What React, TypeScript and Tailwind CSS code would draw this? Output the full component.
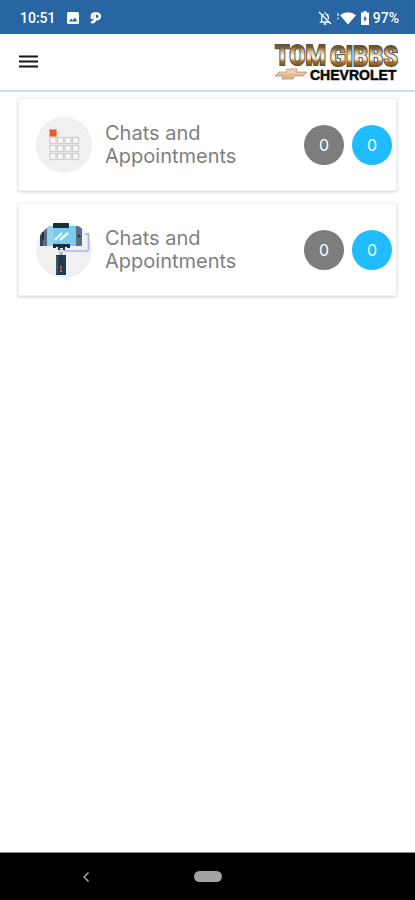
import React from 'react';

const CalendarIcon: React.FC = () => (
  <svg viewBox="0 0 56 56" className="size-14 shrink-0" aria-hidden="true">
    <circle cx="28" cy="28" r="28" fill="#f0f0f0" />
    {[20.5, 28.5, 36.5].map((y) =>
      [14, 21.5, 29, 36.5].map((x) => (
        <rect key={`${x}-${y}`} x={x} y={y} width="6" height="6" fill="#f7f7f7" stroke="#cfcfd3" strokeWidth="1.2" />
      ))
    )}
    <rect x="13.5" y="12.5" width="7" height="7" fill="#f15a24" stroke="#f2a183" strokeWidth="0.6" />
  </svg>
);

const SelfieStickIcon: React.FC = () => (
  <svg viewBox="0 0 56 56" className="size-14 shrink-0" aria-hidden="true">
    <defs>
      <clipPath id="stick-clip">
        <circle cx="28" cy="28" r="28" />
      </clipPath>
    </defs>
    <circle cx="28" cy="28" r="28" fill="#f0f0f0" />
    <path d="M45 11h7v17H29" fill="none" stroke="#eef0fc" strokeWidth="3" />
    <path d="M49 12h3.5v15a2 2 0 0 1-2 2H28" fill="none" stroke="#a9b2e2" strokeWidth="1.6" />
    <g clipPath="url(#stick-clip)">
      <rect x="4" y="4" width="42" height="20" rx="1" fill="#5d6e84" />
      <rect x="4" y="4" width="3" height="20" fill="#33475c" />
      <rect x="11" y="4" width="29" height="20" fill="#7dcbea" />
      <rect x="11" y="4" width="6" height="20" fill="#92d4ee" />
      <circle cx="43" cy="14" r="1.6" fill="#24384c" />
      <rect x="6" y="10" width="2" height="8" fill="#1d3347" />
    </g>
    <path d="M19 18l7-7M24 18l8-7" stroke="#e6f7fd" strokeWidth="2.4" />
    <rect x="17" y="1" width="16" height="5" rx="1" fill="#172f40" />
    <path d="M17 22h17v4h-3v-1h-2v3h-2v-2h-3v2h-2v-3h-2v1h-3z" fill="#172f40" />
    <path d="M25 27v6" stroke="#9ca7b0" strokeWidth="3" />
    <circle cx="25" cy="29" r="1.5" fill="#dfe5e9" />
    <rect x="20" y="33" width="10" height="20" fill="#1d3b4d" />
    <path d="M21 34v18" stroke="#426072" strokeWidth="1.5" />
    <rect x="24" y="44" width="2" height="3" fill="#e04a3c" />
    <rect x="24" y="48" width="2" height="2" fill="#4ba68f" />
  </svg>
);

const DealerLogo: React.FC = () => (
  <svg viewBox="0 0 126 44" className="h-11 w-[126px]" role="img" aria-label="Tom Gibbs Chevrolet">
    <defs>
      <linearGradient id="metal" x1="0" y1="0" x2="0" y2="1">
        <stop offset="0.22" stopColor="#6e5836" />
        <stop offset="0.35" stopColor="#cdb68e" />
        <stop offset="0.5" stopColor="#fbf6ec" />
        <stop offset="0.58" stopColor="#f3e7d2" />
        <stop offset="0.66" stopColor="#b07524" />
        <stop offset="0.8" stopColor="#7a4f18" />
      </linearGradient>
      <linearGradient id="bowtie" x1="0" y1="0" x2="0" y2="1">
        <stop offset="0" stopColor="#f4d9bd" />
        <stop offset="1" stopColor="#d9a982" />
      </linearGradient>
    </defs>
    <g
      className="font-['Roboto_Condensed','Roboto',sans-serif] text-[27px] font-bold"
      fill="url(#metal)"
      stroke="#5c5042"
      strokeWidth="2"
      paintOrder="stroke"
    >
      <text x="2" y="25">TOM</text>
      <text x="57" y="26">GIBBS</text>
    </g>
    <path
      d="M14 29h10l-1 3h11l-4 4H21l-1 3H9l1-3H2l4-4h7z"
      fill="url(#bowtie)"
      stroke="#b39478"
      strokeWidth="0.8"
    />
    <text
      x="37"
      y="40"
      fill="#080808"
      stroke="#080808"
      strokeWidth="0.5"
      className="font-['Liberation_Sans',Arial,sans-serif] text-[14px] font-bold"
    >
      CHEVROLET
    </text>
  </svg>
);

const StatusBar: React.FC = () => (
  <div className="flex h-[34px] items-center justify-between bg-[#2865a3] pt-0.5 pr-4 pl-5 text-sm font-medium text-white">
    <div className="flex items-center">
      <span>10:51</span>
      <svg viewBox="0 0 14 14" className="ml-2.5 size-3.5" aria-hidden="true">
        <rect x="1" y="1" width="12" height="12" rx="1.5" fill="#fff" />
        <path d="M3 10.5l2.200-3 1.600 2 2.200-3 2.500 4z" fill="#2865a3" />
      </svg>
      <svg viewBox="0 0 12 14" className="ml-2.5 h-3.5 w-3" aria-hidden="true">
        <path
          d="M2 7V4.500A2.500 2.500 0 0 1 4.500 2.500H7a2.800 2.800 0 0 1 0 5.700H4.800M4.800 5v3.500c0 1.500-1 2.700-2.800 2.700"
          fill="none"
          stroke="#fff"
          strokeWidth="2.6"
          strokeLinecap="round"
        />
      </svg>
    </div>
    <div className="flex items-center">
      <svg viewBox="0 0 24 24" className="size-4" aria-hidden="true">
        <path
          d="M7 17V11a5 5 0 0 1 3-4.600M12 3v2M13 6a5 5 0 0 1 4 5v3M4 18h13M10 21h4M3 3l18 18"
          fill="none"
          stroke="#fff"
          strokeWidth="2"
        />
      </svg>
      <svg viewBox="0 0 20 14" className="ml-1 h-3.5 w-5" aria-hidden="true">
        <path d="M1 2v3M1 6.500v2" stroke="#d5e4f2" strokeWidth="1.3" />
        <path d="M3 4.300a12 12 0 0 1 16 0L11 13.500z" fill="#fff" />
      </svg>
      <svg viewBox="0 0 8 14" className="ml-1 h-3.5 w-2" aria-hidden="true">
        <path d="M2.500 0h3v1.500H8V14H0V1.500h2.500z" fill="#fff" />
        <path d="M4.600 4L2.300 8.300h1.300V11.500L5.800 7H4.600z" fill="#2865a3" />
      </svg>
      <span className="ml-1">97%</span>
    </div>
  </div>
);

const App: React.FC = () => {
  const items = [
    { id: 1, title: 'Chats and Appointments', icon: <CalendarIcon />, pending: 0, unread: 0 },
    { id: 2, title: 'Chats and Appointments', icon: <SelfieStickIcon />, pending: 0, unread: 0 },
  ];

  return (
    <div className="flex min-h-screen flex-col bg-white font-['Roboto',sans-serif]">
      <StatusBar />
      <header className="flex h-[58px] items-center justify-between border-b-2 border-[#c6e0f3] pr-4 pl-[19px]">
        <button type="button" aria-label="Open menu" className="flex h-10 items-center">
          <svg viewBox="0 0 19 14" className="h-3.5 w-[19px]" aria-hidden="true">
            <path d="M0 1.500h19M0 6.500h19M0 11.500h19" stroke="#161616" strokeWidth="2" />
          </svg>
        </button>
        <DealerLogo />
      </header>

      <main className="flex-1 px-[18px] pt-1.5">
        <ul className="space-y-3">
          {items.map((item) => (
            <li
              key={item.id}
              className="flex h-[93px] items-center border border-[#f1f1f1] bg-white pr-1 pl-[17px] shadow-[0_1px_3px_rgba(0,0,0,0.18)]"
            >
              {item.icon}
              <h2 className="ml-[13px] w-40 font-['Inter',sans-serif] text-xl leading-[23px] font-normal text-[#808080]">
                {item.title}
              </h2>
              <div className="ml-auto flex gap-2 font-['Inter',sans-serif] text-base text-white">
                <span className="flex size-10 items-center justify-center rounded-full bg-[#7d7d7d]">
                  {item.pending}
                </span>
                <span className="flex size-10 items-center justify-center rounded-full bg-[#1fbcff]">
                  {item.unread}
                </span>
              </div>
            </li>
          ))}
        </ul>
      </main>

      <nav className="grid h-12 grid-cols-5 items-center border-t border-[#8c8c8c] bg-black">
        <button type="button" aria-label="Back" className="col-start-2 flex h-full items-center">
          <svg viewBox="0 0 6 10" className="h-2.5 w-1.5" aria-hidden="true">
            <path d="M5.500 0.500L1 5l4.500 4.500" fill="none" stroke="#a8a8a8" strokeWidth="1.5" />
          </svg>
        </button>
        <button type="button" aria-label="Home" className="flex h-full items-center justify-center">
          <span className="h-[11px] w-7 rounded-full bg-[#a3a3a3]" />
        </button>
      </nav>
    </div>
  );
};

export default App;
